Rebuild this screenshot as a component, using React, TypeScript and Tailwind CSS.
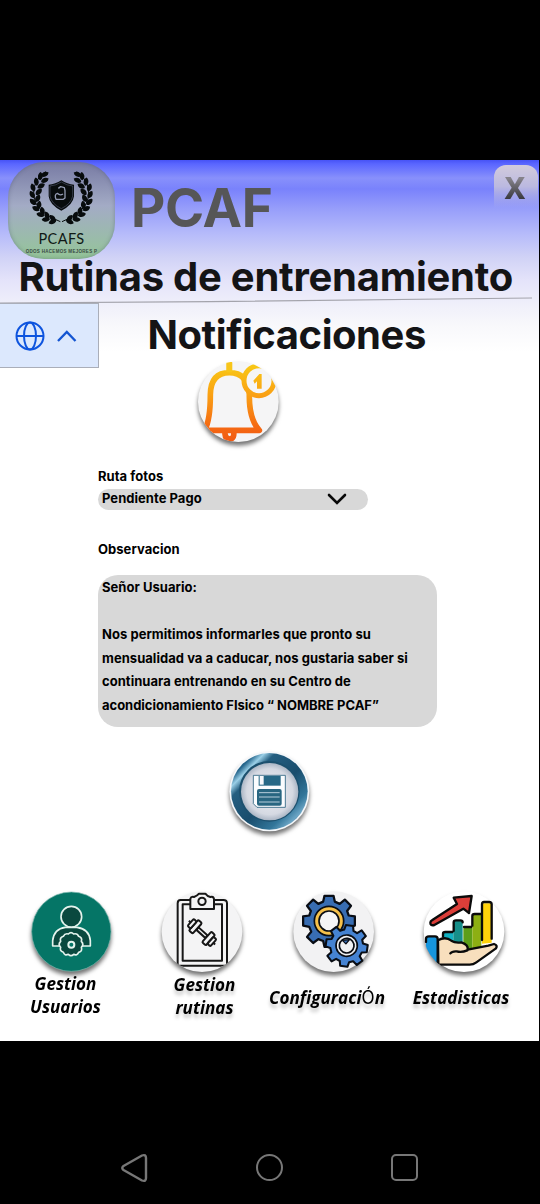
import React from "react";

const circleShadow = "drop-shadow-[0_11px_6px_rgba(0,0,0,0.55)]";

function Leaf({ x, y, r }: { x: number; y: number; r: number }) {
  return <path d="M0 -13C10 -6 9 7 0 12C-9 7 -10 -6 0 -13Z" transform={`translate(${x} ${y}) rotate(${r})`} />;
}

const leaves: [number, number, number][] = [
  [134, 59, 65], [121, 65, 5], [134, 77, 65], [109, 81, -8], [123, 94, 62],
  [99, 99, -18], [116, 112, 45], [97, 120, -30], [113, 131, 25], [99, 142, -45],
  [117, 151, 8], [108, 162, -62], [127, 169, -10], [122, 180, -78], [141, 182, -25],
  [138, 194, -95], [158, 191, -40], [158, 201, -110],
];

function Logo() {
  return (
    <div className="mt-[2px] ml-2 flex h-[97px] w-[107px] flex-col items-center overflow-hidden rounded-[36px] bg-linear-to-b from-[#777aa3] via-[#a3abc5] via-45% to-[#94c597] shadow-[inset_0_0_4px_rgba(50,60,90,0.35)]">
      <svg viewBox="0 0 321 201" className="h-[67px] w-[107px] shrink-0" fill="#080c0d">
        <g transform="translate(-24 -22)">
          <g>
            {leaves.map(([x, y, r], i) => <Leaf key={i} x={x} y={y} r={r} />)}
            <path d="M137 51Q96 78 101 125Q109 174 181 201" fill="none" stroke="#080c0d" strokeWidth="3" />
          </g>
          <g transform="translate(367 0) scale(-1 1)">
            {leaves.map(([x, y, r], i) => <Leaf key={i} x={x} y={y} r={r} />)}
            <path d="M137 51Q96 78 101 125Q109 174 181 201" fill="none" stroke="#080c0d" strokeWidth="3" />
          </g>
          <path d="M184 77Q202 89 222 90V125Q219 151 184 168Q149 151 146 125V90Q166 89 184 77Z" />
          <path d="M184 82Q201 93 218 94V124Q214 147 184 162Q154 147 150 124V94Q167 93 184 82Z" fill="none" stroke="#7980a2" strokeWidth="1.2" />
          <path d="M175 101L182 96L193 99L195 108V130L190 134H168Q162 119 172 116Q180 124 189 118" fill="none" stroke="#9299b0" strokeWidth="4" strokeLinejoin="round" />
        </g>
      </svg>
      <div className="h-[17px] w-full pt-px text-center font-['Lato'] text-[14.5px] leading-[17px] tracking-[0.4px] text-[#101915]">PCAFS</div>
      <div className="text-center font-['Liberation_Sans'] text-[4.5px] leading-[11px] font-bold tracking-[0.3px] whitespace-nowrap text-[#384b42]">ODOS HACEMOS MEJORES P</div>
    </div>
  );
}

function BellIcon() {
  return (
    <svg viewBox="0 0 360 330" className="-mt-[18px] ml-[180px] h-[110px] w-[120px] shrink-0">
      <defs>
        <linearGradient id="bell" gradientUnits="userSpaceOnUse" x1="0" y1="40" x2="0" y2="275">
          <stop stopColor="#f8ca15" /><stop offset="0.4" stopColor="#faa114" /><stop offset="0.8" stopColor="#f56a13" /><stop offset="1" stopColor="#f15a12" />
        </linearGradient>
        <clipPath id="bellClip"><circle cx="175" cy="155" r="121" /></clipPath>
      </defs>
      <circle cx="175" cy="155" r="121" fill="#f5f5f6" className={circleShadow} />
      <g clipPath="url(#bellClip)" fill="none" stroke="url(#bell)" strokeWidth="17">
        <path d="M148 67V36M75 238Q91 208 91 134Q92 68 148 68Q204 68 208 134Q207 207 238 241H70M135 242V252Q136 267 150 267Q164 266 161 242" strokeLinejoin="round" />
        <circle cx="237" cy="92" r="45" fill="#f5f5f6" strokeWidth="15" />
        <path d="M220 92L238 72H245V116H231V94L224 101Z" fill="url(#bell)" stroke="none" />
      </g>
      <path d="M148 67V38" stroke="#f8c51a" strokeWidth="17" />
    </svg>
  );
}

function SaveIcon() {
  return (
    <svg viewBox="0 0 330 300" className="ml-[215px] h-[100px] w-[110px] shrink-0">
      <defs>
        <linearGradient id="ring" x1="0" y1="0" x2="1" y2="1">
          <stop stopColor="#18415f" /><stop offset=".16" stopColor="#24658b" /><stop offset=".22" stopColor="#9bd0e8" /><stop offset=".29" stopColor="#245e80" /><stop offset=".55" stopColor="#194d6d" /><stop offset=".75" stopColor="#32769a" /><stop offset=".84" stopColor="#6ba4c4" /><stop offset="1" stopColor="#184b6b" />
        </linearGradient>
        <radialGradient id="plate"><stop stopColor="#f1f2f6" /><stop offset=".8" stopColor="#d5d9e2" /><stop offset="1" stopColor="#abb6c5" /></radialGradient>
      </defs>
      <circle cx="163" cy="154" r="120" fill="#f4f7fa" className={circleShadow} />
      <circle cx="163" cy="154" r="115" fill="url(#ring)" />
      <circle cx="163" cy="154" r="91" fill="#1c506e" />
      <circle cx="164" cy="155" r="86" fill="url(#plate)" />
      <path d="M115 106H211V202H126L115 191Z" fill="#fafcfe" stroke="#2b617e" strokeWidth="2.5" />
      <path d="M131 108H197V137H131Z" fill="#276886" /><path d="M134 108H146V134H134Z" fill="#f6f8fb" />
      <rect x="126" y="147" width="74" height="50" rx="6" fill="#286681" />
      <path d="M132 158H194M132 171H194M132 186H194" stroke="#b7cedc" strokeWidth="3" />
    </svg>
  );
}

function UsersIcon() {
  return (
    <svg viewBox="0 0 330 285" className="h-[95px] w-[110px] shrink-0 overflow-visible">
      <circle cx="154" cy="155" r="119" fill="#057566" stroke="#7fbab0" strokeWidth="2" className={circleShadow} />
      <g stroke="#e4f3ed" strokeWidth="5" fill="#0a493f" strokeLinejoin="round">
        <path d="M98 198V182Q102 146 136 142H171Q208 147 211 182V198Z" />
        <circle cx="154" cy="110" r="31" />
        <path d="M145 162Q153 154 161 162Q172 159 176 169Q188 173 184 184Q193 193 184 202Q188 214 176 217Q171 228 161 223Q153 231 145 223Q134 228 130 217Q118 213 122 202Q113 193 122 184Q118 173 130 169Q135 159 145 162Z" />
        <circle cx="154" cy="194" r="9" fill="#057566" strokeWidth="6" />
      </g>
    </svg>
  );
}

function RoutinesIcon() {
  return (
    <svg viewBox="0 0 330 285" className="h-[95px] w-[110px] shrink-0 overflow-visible">
      <defs><clipPath id="boardClip"><path d="M0 0H330V160H277A121 115 0 0 1 35 160H0Z" /></clipPath></defs>
      <circle cx="156" cy="155" r="121" fill="#f4f4f5" className={circleShadow} />
      <g fill="none" stroke="#171717" strokeWidth="6" strokeLinejoin="round" clipPath="url(#boardClip)">
        <path d="M83 275V70Q83 60 92 60H220Q231 60 231 70V275M83 257H231" />
        <rect x="98" y="73" width="118" height="169" />
        <path d="M121 87V56Q123 49 132 51Q142 47 147 41H166Q172 49 181 51Q190 48 192 57V87Z" fill="#f4f4f5" />
        <circle cx="156" cy="64" r="11" />
        <g transform="translate(156 158) rotate(42)" fill="#f4f4f5">
          <rect x="-18" y="-5" width="36" height="10" />
          <rect x="-34" y="-21" width="15" height="42" rx="4" /><rect x="-46" y="-14" width="12" height="28" rx="4" />
          <rect x="19" y="-21" width="15" height="42" rx="4" /><rect x="34" y="-14" width="12" height="28" rx="4" />
          <path d="M-46 0H-53M46 0H53" />
        </g>
      </g>
    </svg>
  );
}

const gearPath = "M-14 -78H14L18 -60L33 -53L49 -66L68 -47L56 -31L61 -17L80 -14V14L61 18L55 33L68 49L49 68L33 56L18 62L14 80H-14L-18 62L-33 56L-49 68L-68 49L-55 33L-61 18L-80 14V-14L-61 -17L-56 -31L-68 -47L-49 -66L-33 -53L-18 -60Z";

function SettingsIcon() {
  return (
    <svg viewBox="0 0 420 285" className="h-[95px] w-[140px] shrink-0 overflow-visible">
      <circle cx="221" cy="155" r="121" fill="#f2f2f3" className={circleShadow} />
      <g stroke="#090d14" strokeLinejoin="round">
        <g transform="translate(207 123)">
          <path d={gearPath} fill="#386db2" strokeWidth="7" transform="scale(.97)" />
          <circle r="44" fill="#f6c14a" strokeWidth="5" /><circle r="30" fill="#f5f5f6" strokeWidth="5" />
        </g>
        <g transform="translate(260 197) rotate(8)">
          <path d={gearPath} transform="scale(.78)" fill="#4583d2" strokeWidth="8" />
          <circle r="32" fill="#f0f1f3" strokeWidth="5" /><circle r="22" fill="#f0f1f3" strokeWidth="5" />
          <path d="M-15 -14L-3 -5L6 -19Z" fill="#386db2" strokeWidth="4" />
        </g>
      </g>
    </svg>
  );
}

function StatsIcon() {
  return (
    <svg viewBox="0 0 420 285" className="h-[95px] w-[140px] shrink-0 overflow-visible">
      <defs><clipPath id="statsClip"><path d="M0 0H420V160H313A121 118 0 0 1 71 160H0Z" /></clipPath></defs>
      <circle cx="192" cy="155" r="121" fill="#fff" className={circleShadow} />
      <g clipPath="url(#statsClip)" stroke="#0b0b0b" strokeWidth="7" strokeLinejoin="round" strokeLinecap="round">
        <path d="M129 190V161Q129 156 136 156H160V190Z" fill="#12b1c2" stroke="none" />
        <path d="M129 170V161Q129 156 136 156H158" fill="none" />
        <path d="M160 195V121H188V200Z" fill="#178f8a" stroke="none" />
        <path d="M161 153V127Q161 121 168 121H181Q188 121 188 127" fill="none" />
        <path d="M190 208V146Q190 139 198 139H217V205Z" fill="#5d9e18" stroke="none" />
        <path d="M192 141H214" fill="none" />
        <path d="M217 207V102H244V199Z" fill="#8daf13" stroke="none" />
        <path d="M217 137V108Q217 102 224 102H242" fill="none" />
        <path d="M246 191V70H275V188Z" fill="#ffd20a" stroke="none" />
        <path d="M246 180V73Q246 66 252 66H267Q275 66 275 73V176" fill="none" />
        <path d="M96 121L171 72L161 53L215 48L207 99L190 86L103 135Q91 138 91 128Q91 124 96 121Z" fill="#dc3e39" />
        <path d="M114 181Q136 168 154 182Q166 190 184 187Q206 194 203 209L265 197L282 192Q294 196 288 205L229 247Q220 254 209 254H115Z" fill="#f8dfbd" />
        <path d="M202 211Q185 218 170 214Q156 213 151 220" fill="none" />
        <path d="M78 176Q78 169 87 169H105Q113 169 113 177V262H78Z" fill="#1695dd" stroke="none" />
        <path d="M78 186V176Q78 169 87 169H105Q113 169 113 177V250" fill="none" />
      </g>
    </svg>
  );
}

function Header() {
  return (
    <header>
      <div className="flex h-[98px]">
        <Logo />
        <div className="ml-[16px] flex-1 text-[53px] leading-[97px] font-bold tracking-[-0.3px] text-[#565657]">PCAF</div>
        <button className="mt-[5px] mr-px h-[43px] w-[44px] rounded-t-[12px] bg-linear-to-b from-[#d2cbdc] via-[#bbb9e0] via-50% to-[#a0a7f5]/0">
          <span className="block -translate-x-px bg-linear-to-b from-[#85828a] from-30% to-[#38383e] to-75% bg-clip-text font-['Noto_Sans'] text-[30px] leading-[46px] font-extrabold text-transparent">X</span>
        </button>
      </div>
      <h1 className="h-[38px] pl-[18.5px] text-[40px] leading-[38px] font-bold tracking-[-0.26px] whitespace-nowrap text-[#141416]">Rutinas de entrenamiento</h1>
      <svg viewBox="0 0 539 7" className="block h-[7px] w-full"><path d="M0 7L210 5.6L532 2" stroke="#a4a4ac" fill="none" strokeWidth="1.2" /></svg>
      <div className="flex h-[65px]">
        <button className="flex w-[99px] items-center border border-l-0 border-[#aaaeb9] bg-[#dce8fd] pl-[15px]">
          <svg viewBox="0 0 30 30" className="size-[30px]" fill="none" stroke="#0e54de" strokeWidth="2"><circle cx="15" cy="15" r="13.5" /><ellipse cx="15" cy="15" rx="6" ry="13.5" /><path d="M1.5 15H28.5" /></svg>
          <svg viewBox="0 0 20 12" className="ml-3 h-3 w-5" fill="none" stroke="#1455d2" strokeWidth="2.3"><path d="M1 11L9.8 2L18.5 11" /></svg>
        </button>
        <h2 className="ml-[48.5px] text-[40px] leading-[64px] font-bold tracking-[-0.46px] text-[#141416]">Notificaciones</h2>
      </div>
    </header>
  );
}

const labelStyle = "block scale-x-[.95] font-['Open_Sans'] text-[18px] leading-[23px] font-bold italic text-black text-center whitespace-nowrap";
const labelShadow = "[text-shadow:0_4px_4px_rgba(0,0,0,0.22)]";

export default function App() {
  return (
    <div className="flex h-[1204px] w-[540px] flex-col bg-black font-['Inter',sans-serif]">
      <main className="mt-[160px] flex h-[881px] w-[539px] flex-col overflow-hidden bg-white bg-[linear-gradient(to_bottom,#4753f5_0px,#5a66ff_4px,#8890fb_18px,#7982fc_29px,#979efa_49px,#b6bbfa_74px,#d0d2f6_97px,#e4e3fa_120px,#efeffa_143px,#f8f8fb_165px,#ffffff_192px)] text-black">
        <Header />
        <BellIcon />
        <section className="mt-[6px] ml-[98px] flex flex-col text-[13px] font-bold tracking-[0.04px] text-black">
          <label className="h-[23px] leading-[21px]">Ruta fotos</label>
          <div className="flex h-[21px] w-[270px] items-center justify-between rounded-full bg-[#d8d8d8] pr-[21px] pl-1">
            <span className="-mt-[2px] leading-[21px]">Pendiente Pago</span>
            <svg viewBox="0 0 20 12" className="-mt-px h-3 w-5" fill="none" stroke="#080808" strokeWidth="2.6" strokeLinecap="round"><path d="M2 2L10 10L18 2" /></svg>
          </div>
          <label className="mt-[29px] h-5 leading-5">Observacion</label>
          <div className="mt-[16px] h-[152px] w-[339px] rounded-[20px] bg-[#d8d8d8] pt-px pl-1 leading-[23.6px] whitespace-nowrap">
            <p>Señor Usuario:</p>
            <p className="mt-[23.6px]">Nos permitimos informarles que pronto su<br />mensualidad va a caducar, nos gustaria saber si<br />continuara entrenando en su Centro de<br /><span className="tracking-[-0.02px]">acondicionamiento FIsico “ NOMBRE PCAF”</span></p>
          </div>
        </section>
        <div className="mt-[13px] h-[140px]"><SaveIcon /></div>
        <nav className="flex">
          <div className="flex w-[130px] flex-col pl-5">
            <UsersIcon />
            <div className="relative w-[91px] -translate-y-[3px]"><span className={labelStyle}>Gestion</span><span className={labelStyle}>Usuarios</span></div>
          </div>
          <div className="flex w-[130px] flex-col pl-5">
            <RoutinesIcon />
            <div className={`relative w-[109px] -translate-y-[2px] ${labelShadow}`}><span className={labelStyle}>Gestion</span><span className={labelStyle}>rutinas</span></div>
          </div>
          <div className="flex w-[140px] flex-col">
            <SettingsIcon />
            <div className={`mt-[11px] w-[134px] ${labelShadow}`}><span className={labelStyle}>Configuraci<span className="font-['Inter'] text-[18px] font-normal not-italic">Ó</span>n</span></div>
          </div>
          <div className="flex w-[139px] flex-col">
            <StatsIcon />
            <div className={`mt-[11px] w-[122px] ${labelShadow}`}><span className={labelStyle}>Estadisticas</span></div>
          </div>
        </nav>
      </main>
      <footer className="flex flex-1 items-end pb-[20px] pl-[120px]">
        <svg viewBox="0 0 30 32" className="h-8 w-[30px]" fill="none" stroke="#777" strokeWidth="2.4" strokeLinejoin="round"><path d="M3.5 14L22 3.5Q26 2 26 6V26Q26 30 22 28.5L3.5 18Q1 16 3.5 14Z" /></svg>
        <span className="mb-[3px] ml-[106px] size-[27px] rounded-full border-2 border-[#777]" />
        <span className="mb-[3px] ml-[108px] size-[27px] rounded-[5px] border-2 border-[#777]" />
      </footer>
    </div>
  );
}
